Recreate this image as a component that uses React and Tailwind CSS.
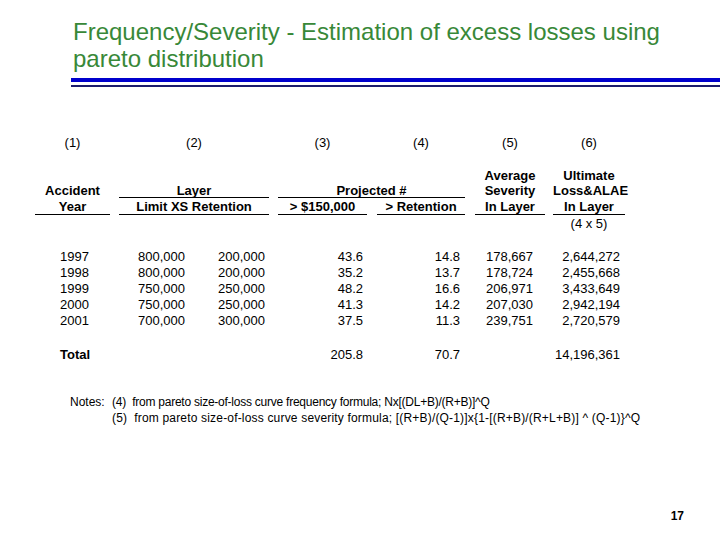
import React from "react";

const C1 = "w-[75px] shrink-0";
const C2 = "w-[150px] shrink-0 ml-[9px]";
const C3 = "w-[89px] shrink-0 ml-[9px]";
const C4 = "w-[88px] shrink-0 ml-[10px]";
const C34 = "w-[187px] shrink-0 ml-[9px]";
const C5 = "w-[70px] shrink-0 ml-[10px]";
const C6 = "w-[72px] shrink-0 ml-[8px]";

const rows = [
  ["1997", "800,000", "200,000", "43.6", "14.8", "178,667", "2,644,272"],
  ["1998", "800,000", "200,000", "35.2", "13.7", "178,724", "2,455,668"],
  ["1999", "750,000", "250,000", "48.2", "16.6", "206,971", "3,433,649"],
  ["2000", "750,000", "250,000", "41.3", "14.2", "207,030", "2,942,194"],
  ["2001", "700,000", "300,000", "37.5", "11.3", "239,751", "2,720,579"],
];

function DataRow({ r }) {
  return (
    <div className="flex pl-[35px]">
      <div className={C1 + " pl-[25px]"}>{r[0]}</div>
      <div className={C2 + " flex"}>
        <div className="w-[66px] text-right">{r[1]}</div>
        <div className="w-[80px] text-right">{r[2]}</div>
      </div>
      <div className={C3 + " text-right pr-[4px]"}>{r[3]}</div>
      <div className={C4 + " text-right pr-[5px]"}>{r[4]}</div>
      <div className={C5 + " text-right pr-[12px]"}>{r[5]}</div>
      <div className={C6 + " text-right pr-[5px]"}>{r[6]}</div>
    </div>
  );
}

export default function App() {
  return (
    <div className="w-[720px] h-[540px] bg-white text-black overflow-hidden font-['Liberation_Sans',Arial,sans-serif]">
      {/* title */}
      <h1 className="pt-[18px] pl-[73px] text-[24px] leading-[27px] text-[#388838] font-normal">
        Frequency/Severity - Estimation of excess losses using
        <br />
        pareto distribution
      </h1>
      <div className="ml-[71px] mt-[6px] h-[4px] bg-[#0000cc]" />
      <div className="ml-[71px] mt-[3px] h-[2px] bg-[#1c1c6c]" />

      {/* table */}
      <div className="mt-[48px] text-[13px]">
        <div className="flex pl-[35px] leading-[16px] text-center">
          <div className={C1}>(1)</div>
          <div className={C2}>(2)</div>
          <div className={C3}>(3)</div>
          <div className={C4}>(4)</div>
          <div className={C5}>(5)</div>
          <div className={C6}>(6)</div>
        </div>

        <div className="flex pl-[35px] mt-[17px] leading-[16px] text-center font-bold">
          <div className={C1} />
          <div className={C2} />
          <div className={C3} />
          <div className={C4} />
          <div className={C5}>Average</div>
          <div className={C6}>Ultimate</div>
        </div>

        <div className="flex pl-[35px] leading-[13px] text-center font-bold">
          <div className={C1}>Accident</div>
          <div className={C2 + " border-b border-black"}>Layer</div>
          <div className={C34 + " border-b border-black"}>Projected #</div>
          <div className={C5}>Severity</div>
          <div className={C6}>Loss&amp;ALAE</div>
        </div>

        <div className="flex pl-[35px] mt-[2px] leading-[14px] text-center font-bold">
          <div className={C1 + " border-b border-black"}>Year</div>
          <div className={C2 + " border-b border-black"}>Limit XS Retention</div>
          <div className={C3 + " border-b border-black"}>&gt; $150,000</div>
          <div className={C4 + " border-b border-black"}>&gt; Retention</div>
          <div className={C5 + " border-b border-black"}>In Layer</div>
          <div className={C6 + " border-b border-black"}>In Layer</div>
        </div>

        <div className="flex pl-[35px] mt-[1px] leading-[16px] text-center">
          <div className={C1} />
          <div className={C2} />
          <div className={C3} />
          <div className={C4} />
          <div className={C5} />
          <div className={C6}>(4 x 5)</div>
        </div>

        <div className="mt-[17px] leading-[16px]">
          {rows.map((r) => (
            <DataRow key={r[0]} r={r} />
          ))}
        </div>

        <div className="flex pl-[35px] mt-[18px] leading-[16px]">
          <div className={C1 + " pl-[25px] font-bold"}>Total</div>
          <div className={C2} />
          <div className={C3 + " text-right pr-[4px]"}>205.8</div>
          <div className={C4 + " text-right pr-[5px]"}>70.7</div>
          <div className={C5} />
          <div className={C6 + " text-right pr-[5px]"}>14,196,361</div>
        </div>
      </div>

      {/* notes */}
      <div className="mt-[31px] pl-[70px] text-[12px] leading-[16px]">
        <div className="flex">
          <div className="w-[42px] shrink-0">Notes:</div>
          <div className="tracking-[-0.24px]">(4)&nbsp; from pareto size-of-loss curve frequency formula; Nx[(DL+B)/(R+B)]^Q</div>
        </div>
        <div className="flex">
          <div className="w-[42px] shrink-0" />
          <div className="tracking-[0.18px]">(5)&nbsp; from pareto size-of-loss curve severity formula; [(R+B)/(Q-1)]x{"{"}1-[(R+B)/(R+L+B)] ^ (Q-1){"}"}^Q</div>
        </div>
      </div>

      <div className="mt-[82px] flex justify-end pr-[36px] text-[12px] leading-[16px] font-bold">
        17
      </div>
    </div>
  );
}
